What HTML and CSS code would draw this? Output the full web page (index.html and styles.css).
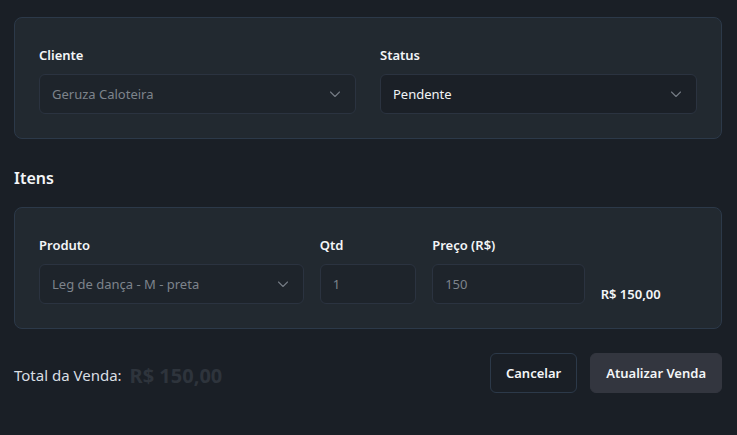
FILE: index.html
```html
<!DOCTYPE html>
<html lang="pt-BR">
<head>
<meta charset="utf-8">
<title>Editar Venda</title>
<link rel="stylesheet" href="styles.css">
</head>
<body>
<div class="page">
  <section class="card">
    <div class="grid-2">
      <div class="field">
        <label class="label">Cliente</label>
        <div class="select disabled">
          <span>Geruza Caloteira</span>
          <svg class="chev" viewBox="0 0 12 12" width="12" height="12"><path d="M1.5 4L6 8.5 10.5 4" fill="none" stroke="currentColor" stroke-width="1.1" stroke-linecap="round" stroke-linejoin="round"/></svg>
        </div>
      </div>
      <div class="field">
        <label class="label">Status</label>
        <div class="select">
          <span>Pendente</span>
          <svg class="chev" viewBox="0 0 12 12" width="12" height="12"><path d="M1.5 4L6 8.5 10.5 4" fill="none" stroke="currentColor" stroke-width="1.1" stroke-linecap="round" stroke-linejoin="round"/></svg>
        </div>
      </div>
    </div>
  </section>

  <h2 class="section-title">Itens</h2>

  <section class="card">
    <div class="grid-12">
      <div class="field span-5">
        <label class="label">Produto</label>
        <div class="select disabled">
          <span>Leg de dança - M - preta</span>
          <svg class="chev" viewBox="0 0 12 12" width="12" height="12"><path d="M1.5 4L6 8.5 10.5 4" fill="none" stroke="currentColor" stroke-width="1.1" stroke-linecap="round" stroke-linejoin="round"/></svg>
        </div>
      </div>
      <div class="field span-2">
        <label class="label">Qtd</label>
        <div class="input disabled">1</div>
      </div>
      <div class="field span-3">
        <label class="label">Preço (R$)</label>
        <div class="input disabled">150</div>
      </div>
      <div class="subtotal span-2">R$ 150,00</div>
    </div>
  </section>

  <footer class="footer">
    <div class="total">
      <span class="total-label">Total da Venda:</span>
      <span class="total-value">R$ 150,00</span>
    </div>
    <div class="actions">
      <button class="btn btn-outline">Cancelar</button>
      <button class="btn btn-primary">Atualizar Venda</button>
    </div>
  </footer>
</div>
</body>
</html>
```

FILE: styles.css
```css
* { box-sizing: border-box; }
html, body {
  margin: 0;
  padding: 0;
  background: #1a1f26;
  color: #f1f4f7;
  font-family: "Noto Sans", "Open Sans", sans-serif;
  font-size: 14px;
}
.page {
  padding: 17px 15px 0 14px;
}
.card {
  background: #222930;
  border: 1px solid #2c3949;
  border-radius: 8px;
  padding: 27px 24px 24px;
}
.grid-2 {
  display: grid;
  grid-template-columns: 1fr 1fr;
  column-gap: 24px;
}
.grid-12 {
  display: grid;
  grid-template-columns: repeat(12, 1fr);
  column-gap: 16px;
}
.span-5 { grid-column: span 5; }
.span-3 { grid-column: span 3; }
.span-2 { grid-column: span 2; }
.field {
  display: flex;
  flex-direction: column;
}
.label {
  font-size: 13px;
  font-weight: 600;
  line-height: 20px;
  color: #f4f6f8;
  margin-bottom: 9px;
}
.select, .input {
  height: 40px;
  border: 1px solid #2b3340;
  border-radius: 6px;
  background: #1b2027;
  display: flex;
  align-items: center;
  padding: 0 12px;
  font-size: 13px;
  color: #f1f4f7;
}
.select { justify-content: space-between; padding-right: 14px; }
.select.disabled, .input.disabled {
  color: #7d838b;
  background: #1e242b;
}
.chev { color: #747b84; width: 12px; height: 12px; }
.subtotal {
  align-self: end;
  font-size: 13px;
  font-weight: 600;
  line-height: 20px;
  color: #f4f6f8;
  padding-bottom: 0;
}
.section-title {
  margin: 27px 0 17px;
  font-size: 16px;
  font-weight: 600;
  line-height: 24px;
  color: #f4f6f8;
}
.footer {
  margin-top: 24px;
  display: flex;
  justify-content: space-between;
  align-items: center;
}
.total {
  display: flex;
  align-items: center;
  gap: 8px;
  padding-top: 4px;
}
.total-label {
  font-size: 15px;
  color: #d9dee3;
}
.total-value {
  font-size: 20px;
  font-weight: 700;
  color: #2e343c;
}
.actions {
  display: flex;
  gap: 13px;
}
.btn {
  height: 40px;
  border-radius: 6px;
  font-family: inherit;
  font-size: 13px;
  font-weight: 600;
  color: #f4f6f8;
  padding: 0 15px;
  cursor: pointer;
}
.btn-outline {
  background: transparent;
  border: 1px solid #2c3949;
}
.btn-primary {
  background: #33363f;
  border: 1px solid #33363f;
}
```
